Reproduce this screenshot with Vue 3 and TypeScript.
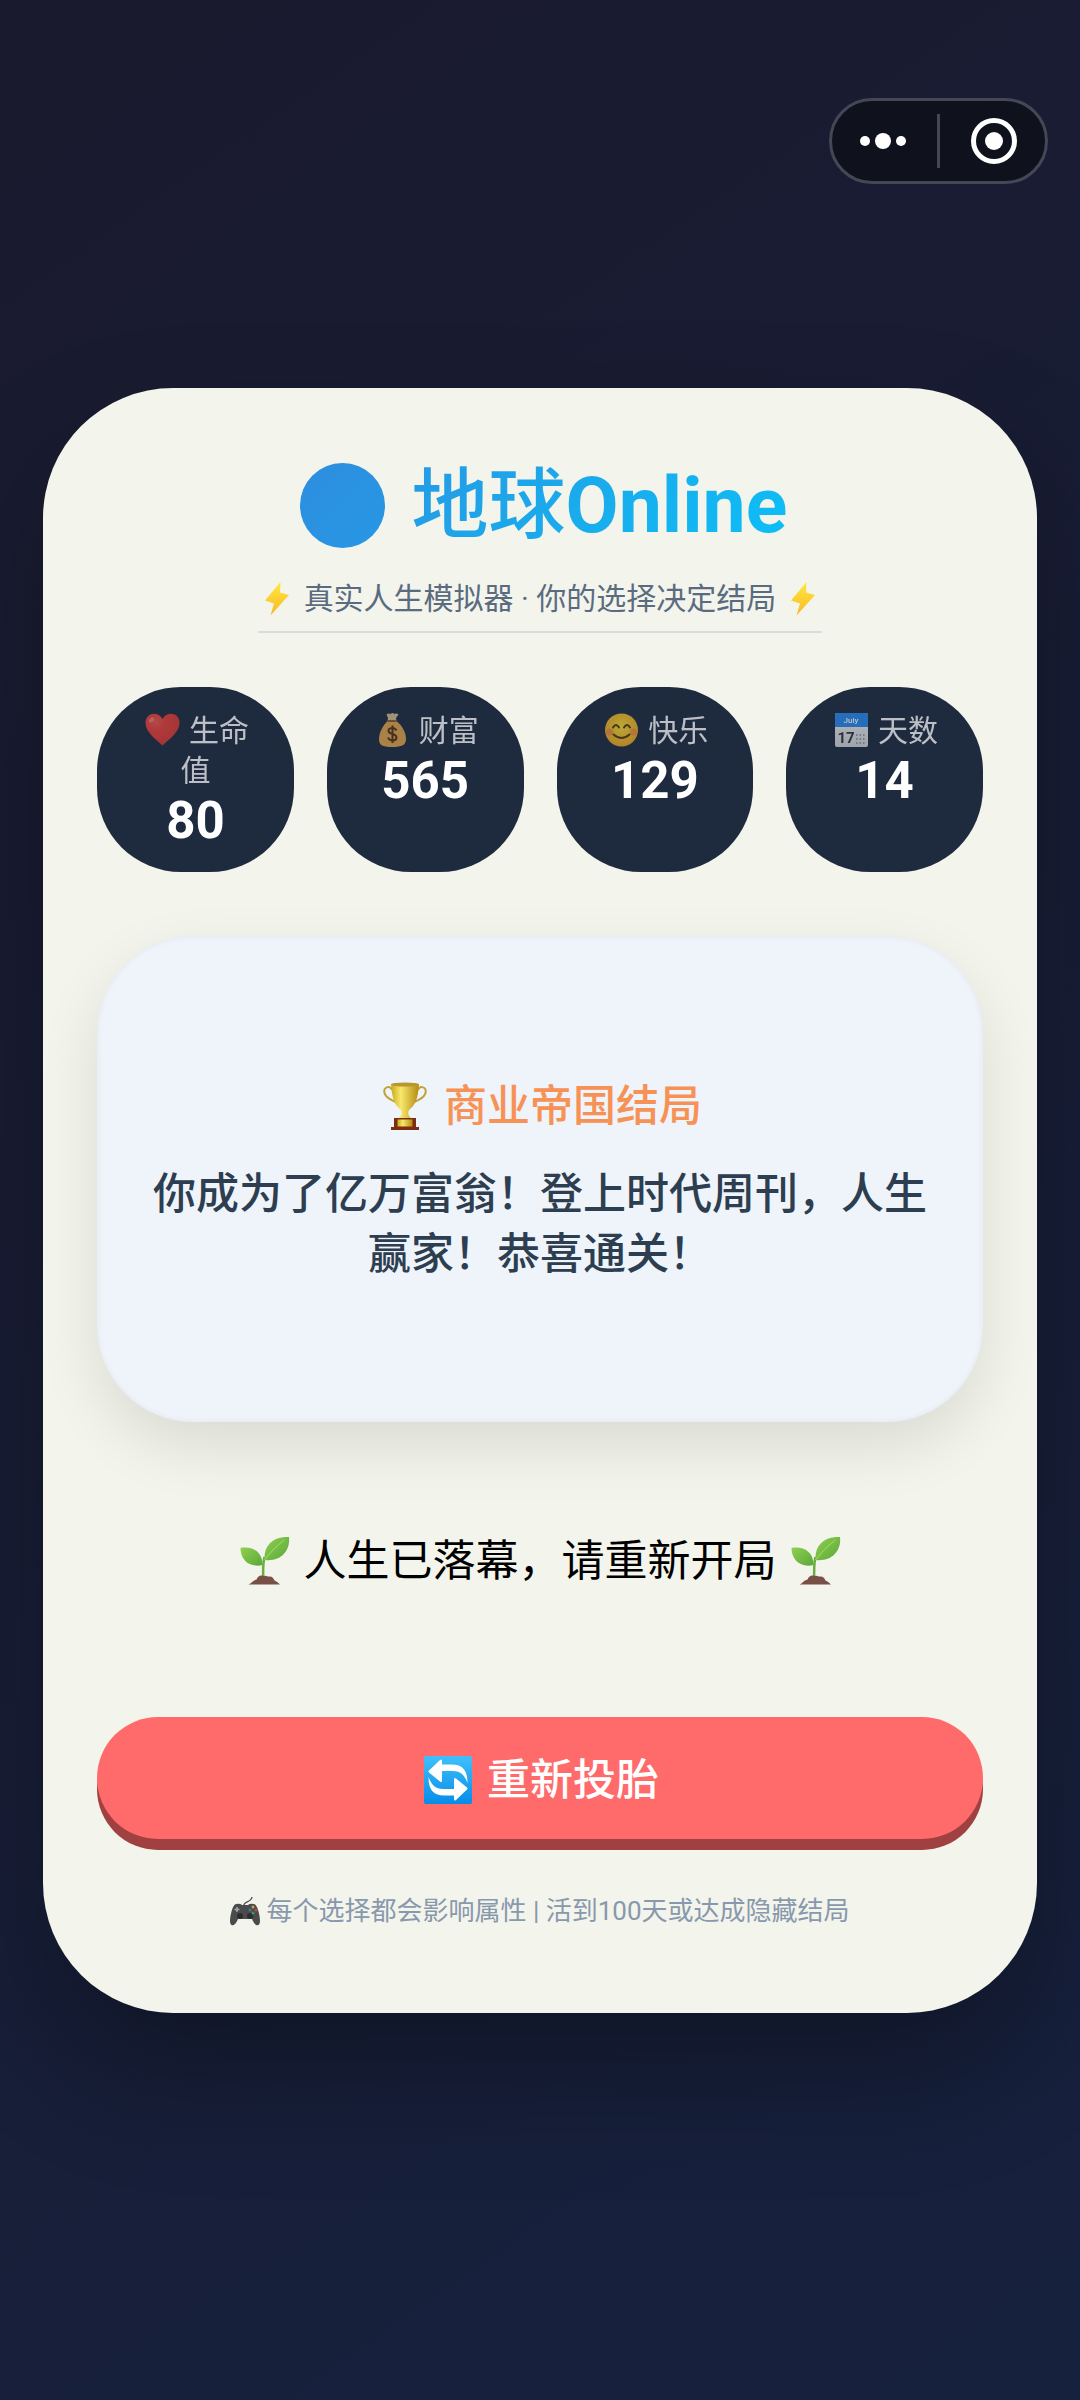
<script setup lang="ts">
import { ref } from 'vue'

interface Stat {
  key: 'life' | 'wealth' | 'joy' | 'days'
  label: string
  value: number
}

const stats = ref<Stat[]>([
  { key: 'life', label: '生命值', value: 80 },
  { key: 'wealth', label: '财富', value: 565 },
  { key: 'joy', label: '快乐', value: 129 },
  { key: 'days', label: '天数', value: 14 },
])

const ending = {
  title: '商业帝国结局',
  text: '你成为了亿万富翁！登上时代周刊，人生赢家！恭喜通关！',
}
</script>

<template>
  <div class="page">
    <svg class="defs" width="0" height="0" aria-hidden="true">
      <defs>
        <linearGradient id="globe" x1="0" y1="0" x2="1" y2="1">
          <stop offset="0" stop-color="#2e8dde" />
          <stop offset="1" stop-color="#2698e5" />
        </linearGradient>
        <linearGradient id="bolt" x1="0" y1="0" x2="0" y2="1">
          <stop offset="0" stop-color="#feea3b" />
          <stop offset="1" stop-color="#fbb62c" />
        </linearGradient>
        <linearGradient id="leaf" x1="0" y1="0" x2="1" y2="1">
          <stop offset="0" stop-color="#8fd04f" />
          <stop offset="1" stop-color="#5aa83a" />
        </linearGradient>
        <linearGradient id="gold" x1="0" y1="0" x2="1" y2="0">
          <stop offset="0" stop-color="#c9a91c" />
          <stop offset="0.35" stop-color="#f7e96a" />
          <stop offset="1" stop-color="#b58a12" />
        </linearGradient>
        <linearGradient id="sky" x1="0" y1="0" x2="0" y2="1">
          <stop offset="0" stop-color="#40c0fb" />
          <stop offset="1" stop-color="#078ce9" />
        </linearGradient>
        <radialGradient id="heart" cx="0.3" cy="0.25" r="0.8">
          <stop offset="0" stop-color="#f4564c" />
          <stop offset="0.35" stop-color="#ee4039" />
          <stop offset="1" stop-color="#dd3a32" />
        </radialGradient>
        <radialGradient id="face" cx="0.5" cy="0.4" r="0.6">
          <stop offset="0" stop-color="#fde030" />
          <stop offset="1" stop-color="#f0a920" />
        </radialGradient>
        <linearGradient id="paper" x1="0" y1="0" x2="0" y2="1">
          <stop offset="0" stop-color="#f5f5f5" />
          <stop offset="1" stop-color="#d6d9dc" />
        </linearGradient>
        <symbol id="i-bolt" viewBox="0 0 26 34">
          <path d="M16.500 0 1 18.500l9 3L6.500 33.500 25 13l-9-2.500z" fill="url(#bolt)" />
        </symbol>
        <symbol id="i-sprout" viewBox="0 0 49 48">
          <path d="M22.500 42C23 33 22 28 24 20" fill="none" stroke="#6aae3e" stroke-width="2.500" />
          <path d="M0 11C11 9 22 14 22 28 9 31 0 23 0 11z" fill="url(#leaf)" />
          <path d="M48.500 0C50 13 41 25 24 23 23 9 32-1 48.500 0z" fill="url(#leaf)" />
          <path d="M44 3C36 9 30 15 24 23" fill="none" stroke="#a7dc6c" stroke-width="1" />
          <path d="M8 47.500c3-1 4-4 8-5 2-4 4-4.500 7-3.500 3-1 4 1 6 .5 3 0 4 2 5 4 3 1 4 3 5.500 4z" fill="#795046" />
        </symbol>
      </defs>
    </svg>

    <div class="capsule">
      <button type="button" aria-label="更多">
        <svg width="48" height="48" viewBox="0 0 48 48" fill="#fff">
          <circle cx="6" cy="24" r="5" /><circle cx="24" cy="24" r="8" /><circle cx="42" cy="24" r="5" />
        </svg>
      </button>
      <span class="divider"></span>
      <button type="button" aria-label="关闭">
        <svg width="48" height="48" viewBox="0 0 48 48">
          <circle cx="24" cy="24" r="20.500" fill="none" stroke="#fff" stroke-width="5" />
          <circle cx="24" cy="24" r="9" fill="#fff" />
        </svg>
      </button>
    </div>

    <main class="card">
      <h1>
        <svg class="globe" viewBox="0 0 99 85" aria-hidden="true"><circle cx="49.500" cy="42.500" r="42.500" fill="url(#globe)" /></svg>
        <span class="name"><span class="han">地球</span>Online</span>
      </h1>
      <p class="subtitle">
        <svg aria-hidden="true"><use href="#i-bolt" /></svg>
        <span>真实人生模拟器 · 你的选择决定结局</span>
        <svg aria-hidden="true"><use href="#i-bolt" /></svg>
      </p>

      <section class="stats">
        <div v-for="s in stats" :key="s.key" class="stat">
          <div class="label">
            <svg v-if="s.key === 'life'" viewBox="0 0 34 34" aria-hidden="true">
              <path d="M17 32.500C10 26 0 19 0 10 0-1 13-2 17 6c4-8 17-7 17 4 0 9-10 16-17 22.500z" fill="url(#heart)" />
              <ellipse cx="6" cy="7" rx="3" ry="2" fill="#ff9c92" opacity="0.600" transform="rotate(-40 6 7)" />
            </svg>
            <svg v-else-if="s.key === 'wealth'" viewBox="0 0 34 34" aria-hidden="true">
              <path d="M12 8 12.500 5 11 1.500Q13 0 15 1q2-2 4 0 2-1 4 .5L20.500 5 21 8z" fill="#d9bf90" />
              <path d="M12 8h9c5 4 9.500 11 9.500 18 0 6-4 8-14 8s-13-2-13-8C3.500 19 8 12 12 8z" fill="#e6a64a" />
              <path d="M12 8h9" stroke="#8e5c2a" stroke-width="2" />
              <path d="M21 17.500C19 14 12.500 14.500 13 18c.5 4 8 2 8 6.500 0 4-7 4-8.500 0M17 12.500v17.500" fill="none" stroke="#573516" stroke-width="2" />
            </svg>
            <svg v-else-if="s.key === 'joy'" viewBox="0 0 34 34" aria-hidden="true">
              <circle cx="17" cy="17" r="16.500" fill="url(#face)" />
              <circle cx="5" cy="19" r="3.500" fill="#f3794a" opacity="0.600" /><circle cx="29" cy="19" r="3.500" fill="#f3794a" opacity="0.600" />
              <path d="M8.500 14.500q3-5 6 0M19.500 14.500q3-5 6 0M9 21.500q8 7 16 0" fill="none" stroke="#5d3a12" stroke-width="2" stroke-linecap="round" />
            </svg>
            <svg v-else viewBox="0 0 34 34" aria-hidden="true">
              <rect x="0.500" y="0" width="33" height="34" rx="2" fill="url(#paper)" />
              <path d="M2.500 0h29q2 0 2 2v12H.500V2q0-2 2-2z" fill="#2a8cf0" />
              <text x="16.500" y="10" text-anchor="middle" font-size="8" font-weight="500" fill="#fff">July</text>
              <text x="11.500" y="30" text-anchor="middle" font-size="15" font-weight="700" fill="#33363a">17</text>
              <path d="M21.500 22h10M21.500 26h10M21.500 30h10" stroke="#85898d" stroke-width="1.500" stroke-dasharray="1.500 2" />
            </svg>{{ s.label }}
          </div>
          <div class="value">{{ s.value }}</div>
        </div>
      </section>

      <section class="event">
        <h2 class="row">
          <svg viewBox="0 0 44 48" aria-hidden="true">
            <path d="M9 8C7 3 0 5 1.500 11c1 5 6 6 11 9M35 8c2-5 9-3 7.500 3-1 5-6 6-11 9" fill="none" stroke="#c0a334" stroke-width="2" />
            <path d="M8 2c1 15 4 21 9 25 3 3 2 7-2 10h14c-4-3-5-7-2-10 5-4 8-10 9-25z" fill="url(#gold)" />
            <ellipse cx="22" cy="2.500" rx="14" ry="2" fill="#b8982c" />
            <path d="M11 36h22v10H11z" fill="#7c2d12" /><path d="M14.500 37.500h15v7h-15z" fill="url(#gold)" />
            <path d="M8 45h28v3H8z" fill="#7c2d12" />
          </svg>
          <span>{{ ending.title }}</span>
        </h2>
        <p>{{ ending.text }}</p>
      </section>

      <p class="message row">
        <svg aria-hidden="true"><use href="#i-sprout" /></svg>
        <span>人生已落幕，请重新开局</span>
        <svg aria-hidden="true"><use href="#i-sprout" /></svg>
      </p>

      <button type="button" class="restart row">
        <svg viewBox="0 0 48 48" aria-hidden="true">
          <rect width="48" height="48" rx="2" fill="url(#sky)" />
          <g fill="#fff">
            <path id="arrow" d="M5 14.500 16 4q2-1.500 2 1v3.500h10c10 0 15.500 5 15.500 18.500-3-8-7-12-14.500-12H18v9.500q0 2.500-2 1L5 16.500q-1-1 0-2z" />
            <use href="#arrow" transform="rotate(180 24 24)" />
          </g>
        </svg>
        <span>重新投胎</span>
      </button>

      <footer>
        <svg viewBox="0 0 30 30" aria-hidden="true">
          <path d="M14 10c-1-5 7-3 8-9" fill="none" stroke="#555" stroke-width="1.500" />
          <path d="M6 8q4-1 6 1h6q2-2 6-1c4 1 6 13 6 17 0 6-5 6-8-2H8C5 31 0 31 0 25 0 21 2 9 6 8z" fill="#4a4b4d" />
          <circle cx="10" cy="20" r="3" fill="#2b2c2e" /><circle cx="20" cy="20" r="3" fill="#2b2c2e" />
          <path d="M7 11v5M4.500 13.500h5" stroke="#a5a8ab" stroke-width="1.500" />
          <circle cx="23" cy="11" r="1.500" fill="#c5a636" /><circle cx="26" cy="14" r="1.500" fill="#d43e3a" />
          <circle cx="20" cy="14" r="1.500" fill="#3a77b8" /><circle cx="23" cy="17" r="1.500" fill="#3c9a58" />
        </svg>
        <span>每个选择都会影响属性 | 活到100天或达成隐藏结局</span>
      </footer>
    </main>
  </div>
</template>

<style>
body {
  margin: 0;
}
</style>

<style scoped>
.page {
  position: relative;
  display: flex;
  align-items: center;
  justify-content: center;
  min-height: 100vh;
  background: linear-gradient(145deg, #1a1a2e 0%, #16213e 100%);
  font-family: Roboto, 'Noto Sans CJK SC', sans-serif;
  overflow: hidden;
}
.defs {
  position: absolute;
}
h1,
h2,
p {
  margin: 0;
}
button {
  border: 0;
  padding: 0;
  font: inherit;
  cursor: pointer;
}
svg {
  flex: none;
}

.capsule {
  position: absolute;
  top: 98px;
  right: 32px;
  display: flex;
  align-items: center;
  box-sizing: border-box;
  width: 219px;
  height: 86px;
  border: 3px solid #454656;
  border-radius: 43px;
  background: #0f111c;
}
.capsule button {
  display: flex;
  flex: 1;
  align-items: center;
  justify-content: center;
  background: none;
}
.capsule button:first-child {
  padding-right: 3px;
}
.capsule button:last-child {
  padding-left: 3px;
}
.divider {
  width: 3px;
  height: 54px;
  background: #454656;
}

.card {
  box-sizing: border-box;
  width: 92%;
  padding: 54px 54px 82px;
  border-radius: 130px;
  background: #f3f4eb;
  box-shadow: 0 60px 120px rgba(0, 0, 0, 0.3);
  display: flex;
  flex-direction: column;
}
h1 {
  display: flex;
  align-items: center;
  justify-content: center;
  gap: 20px;
  font-size: 77px;
  line-height: 128px;
  font-weight: 700;
}
.name {
  background: linear-gradient(135deg, #2699e4, #0bc1f7);
  background-clip: text;
  -webkit-background-clip: text;
  color: transparent;
}
.han {
  font-weight: 500;
}
.globe {
  width: 99px;
  height: 85px;
}
.subtitle {
  display: flex;
  align-self: center;
  align-items: center;
  gap: 8px;
  padding: 10px 0 13px;
  border-bottom: 2px solid #dadbd8;
  color: #5a6b80;
  font-size: 30px;
  line-height: 38px;
}
.subtitle svg {
  width: 38px;
  height: 34px;
}

.stats {
  display: grid;
  grid-template-columns: repeat(4, 1fr);
  gap: 33px;
  margin-top: 54px;
}
.stat {
  padding: 24px 36px 21px;
  border-radius: 84px;
  background: #1e2a3e;
  color: #fff;
  text-align: center;
}
.label {
  font-size: 30px;
  line-height: 40px;
  opacity: 0.7;
}
.label svg {
  width: 41px;
  height: 34px;
  margin-right: 6px;
  vertical-align: -6px;
}
.value {
  font-size: 51px;
  line-height: 60px;
  font-weight: 700;
}

.row {
  display: flex;
  align-items: center;
  justify-content: center;
  gap: 12px;
  font-size: 43px;
  line-height: 60px;
}
.row svg {
  width: 54px;
  height: 48px;
}
.event {
  display: flex;
  flex-direction: column;
  justify-content: center;
  gap: 28px;
  min-height: 486px;
  box-sizing: border-box;
  margin-top: 64px;
  padding: 50px 48px 48px;
  border-radius: 96px;
  background: #eff3fa;
  box-shadow: 0 24px 60px rgba(0, 0, 0, 0.1), inset 0 0 6px rgba(0, 0, 0, 0.06);
  text-align: center;
}
.event h2 {
  color: #f79256;
  font-weight: 500;
}
.event p {
  color: #2c3e50;
  font-size: 43px;
  line-height: 60px;
  font-weight: 500;
}
.message {
  min-height: 150px;
  margin-top: 64px;
  color: #000;
}
.restart {
  box-sizing: border-box;
  height: 122px;
  margin-top: 81px;
  padding-top: 4px;
  border-radius: 61px;
  background: #ff6b6b;
  box-shadow: 0 11px 0 #a04040;
  color: #fff;
  font-weight: 500;
}
footer {
  display: flex;
  align-items: center;
  justify-content: center;
  gap: 6px;
  margin-top: 52px;
  color: #8898ad;
  font-size: 26px;
  line-height: 40px;
}
footer svg {
  width: 30px;
  height: 30px;
}
</style>
